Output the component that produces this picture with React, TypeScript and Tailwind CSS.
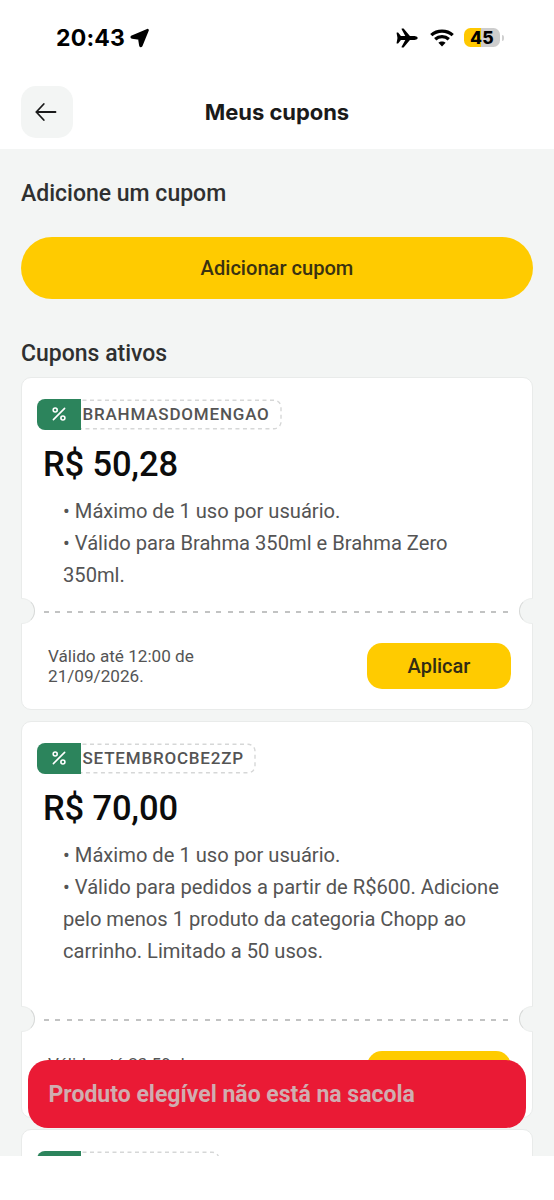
import React from "react";

type Coupon = {
  code: string;
  tagWidth: number;
  value: string;
  lines: string[];
  expiry: string[];
  tall?: boolean;
};

const coupons: Coupon[] = [
  {
    code: "BRAHMASDOMENGAO",
    tagWidth: 245,
    value: "R$ 50,28",
    lines: ["• Máximo de 1 uso por usuário.", "• Válido para Brahma 350ml e Brahma Zero", "350ml."],
    expiry: ["Válido até 12:00 de", "21/09/2026."],
  },
  {
    code: "SETEMBROCBE2ZP",
    tagWidth: 219,
    value: "R$ 70,00",
    lines: [
      "• Máximo de 1 uso por usuário.",
      "• Válido para pedidos a partir de R$600. Adicione",
      "pelo menos 1 produto da categoria Chopp ao",
      "carrinho. Limitado a 50 usos.",
    ],
    expiry: ["Válido até 23:59 de"],
    tall: true,
  },
  { code: "", tagWidth: 183, value: "", lines: [], expiry: [] },
];

function StatusBar() {
  return (
    <div className="flex h-[74px] items-center pl-[56px] pr-[50px] pt-[1px]">
      <span className="font-['Inter',sans-serif] text-[23px] font-bold leading-7 tracking-[0.2px] text-black">20:43</span>
      <svg className="ml-[5px] h-[20px] w-[20px]" viewBox="0 0 20 20">
        <path
          d="M17.6 2.1 2.2 8.7Q1.2 9.3 2.3 9.5L9.3 10.4 10.4 17.4Q10.6 18.6 11.3 17.5Z"
          fill="#000"
          stroke="#000"
          strokeWidth="2.6"
          strokeLinejoin="round"
        />
      </svg>
      <div className="ml-auto flex items-center">
        <svg className="h-[20px] w-[22px]" viewBox="0 0 22 20">
          <path
            d="M.6 4.9Q.5 4.4 1 4.4H2.1L4.9 7.9 9.3 8.1 5.6 1.2Q5.3.5 6 .5H7.6L13.9 8H18.6Q21.8 8.5 21.8 10 21.8 11.5 18.6 12H13.9L7.6 19.5H6Q5.3 19.5 5.6 18.8L9.3 11.9 4.9 12.1 2.1 15.6H1Q.5 15.6.6 15.1L1.4 10.6V9.4Z"
            fill="#000"
          />
        </svg>
        <svg className="ml-[12px] h-[18px] w-[24px]" viewBox="0 0 24 18">
          <path d="M1.3 6.1C7.2.7 16.8.7 22.7 6.1" fill="none" stroke="#000" strokeWidth="3.3" />
          <path d="M5.2 10.2c3.8-3.4 9.8-3.4 13.6 0" fill="none" stroke="#000" strokeWidth="3.3" />
          <path d="M8.4 13.8c2-1.9 5.2-1.9 7.2 0L12 17.4Z" fill="#000" />
        </svg>
        <div className="ml-[10px] flex h-[19px] w-[36px] items-center justify-center rounded-[6.5px] bg-[linear-gradient(90deg,#ffc800_46%,#cdcdcd_46%)]">
          <span className="font-['Inter',sans-serif] text-[17.5px] font-extrabold leading-none tracking-[0.3px] text-black">45</span>
        </div>
        <div className="ml-[2px] h-[6px] w-[2px] rounded-r-full bg-[#cfcfcf]" />
      </div>
    </div>
  );
}

function Tag({ code, width }: { code: string; width: number }) {
  return (
    <div className="relative ml-[16px] flex h-[31px] items-center" style={{ width }}>
      <svg className="absolute inset-0 h-full w-full">
        <rect
          x="1"
          y="1.2"
          width={width - 2}
          height="28.6"
          rx="7"
          fill="none"
          stroke="#d6d7d7"
          strokeWidth="1.4"
          strokeDasharray="4 3.5"
        />
      </svg>
      <div className="relative flex h-[31px] w-[44px] shrink-0 items-center justify-center rounded-l-[8px] bg-[#2c845c]">
        <svg className="h-[14px] w-[14px]" viewBox="0 0 14 14" fill="none" stroke="#fff" strokeWidth="1.6">
          <path d="M12.6 1.4 1.4 12.6" strokeLinecap="round" />
          <circle cx="3.2" cy="3" r="2" />
          <circle cx="10.9" cy="11" r="2" />
        </svg>
      </div>
      <span className="relative ml-[1.5px] whitespace-nowrap text-[17px] font-medium leading-5 tracking-[0.8px] text-[#545454]">
        {code}
      </span>
    </div>
  );
}

function Divider() {
  return (
    <div className="-mx-px flex h-[26px] items-center justify-between overflow-hidden">
      <div className="-ml-[12px] h-[26px] w-[26px] shrink-0 rounded-full border border-y-[#eceeed] border-r-[#d6d8d7] bg-[#f3f5f4]" />
      <div className="ml-[8.5px] mr-[9.5px] mt-[2px] h-[2px] flex-1 bg-[repeating-linear-gradient(90deg,#c2c3c3_0px,#c2c3c3_5px,transparent_5px,transparent_11.47px)]" />
      <div className="-mr-[12px] h-[26px] w-[26px] shrink-0 rounded-full border border-y-[#eceeed] border-l-[#d6d8d7] bg-[#f3f5f4]" />
    </div>
  );
}

function CouponCard({ c }: { c: Coupon }) {
  return (
    <article
      className={`${c.tall ? "h-[397px]" : "h-[333px]"} flex shrink-0 flex-col rounded-[10px] border border-[#e9ebea] bg-white pt-[20.5px]`}
    >
      <div className="-ml-px">
        <Tag code={c.code} width={c.tagWidth} />
      </div>
      {c.code && (
        <>
          <p className="ml-[21px] mt-[14.5px] text-[34.5px] font-medium leading-[40px] tracking-[-0.15px] text-[#0c0c0c]">
            {c.value}
          </p>
          <div
            className={`${c.tall ? "h-[160px]" : "h-[96px]"} ml-[41px] mt-[11px] text-[20.15px] leading-8 text-[#545454]`}
          >
            {c.lines.map((l) => (
              <p key={l} className="whitespace-nowrap">
                {l}
              </p>
            ))}
          </div>
          <div className="mt-[7px]">
            <Divider />
          </div>
          <div className="mt-[19px] flex h-[46px] items-center justify-between pl-[26px] pr-[21px]">
            <div className="h-10 text-[17.15px] leading-5 text-[#545454]">
              {c.expiry.map((l) => (
                <p key={l}>{l}</p>
              ))}
            </div>
            <button className="h-[46px] w-[144px] rounded-[15px] bg-[#ffcb00] text-[20px] font-medium text-[#322c14]">
              Aplicar
            </button>
          </div>
        </>
      )}
    </article>
  );
}

export default function App() {
  return (
    <div className="relative flex h-[1200px] w-[554px] flex-col overflow-hidden bg-white font-['Roboto',sans-serif]">
      <StatusBar />
      <header className="grid h-[75px] grid-cols-[52px_1fr_52px] items-center px-[20.5px]">
        <button
          className="flex h-[52px] w-[52px] items-center justify-center rounded-[15px] bg-[#f3f5f4]"
          aria-label="Voltar"
        >
          <svg
            className="-ml-px h-[20px] w-[22px]"
            viewBox="0 0 22 20"
            fill="none"
            stroke="#1a1a1a"
            strokeWidth="1.8"
            strokeLinecap="round"
            strokeLinejoin="round"
          >
            <path d="M20.5 10H1.3M8.8 2 1.3 10l7.5 8" />
          </svg>
        </button>
        <h1 className="pt-px text-center font-['Inter',sans-serif] text-[22px] font-bold tracking-[-0.05px] text-[#1a1a1a]">
          Meus cupons
        </h1>
      </header>
      <main className="flex h-[1007px] flex-col overflow-hidden bg-[#f3f5f4] px-[21px]">
        <h2 className="mt-[29px] text-[23px] font-medium leading-8 text-[#2f3030]">Adicione um cupom</h2>
        <button className="mt-[27px] h-[62px] shrink-0 rounded-full bg-[#ffcb00] text-[20.1px] font-medium text-[#3a3211]">
          Adicionar cupom
        </button>
        <h2 className="mt-[39px] text-[23px] font-medium leading-8 text-[#2f3030]">Cupons ativos</h2>
        <section className="mt-[7px] flex flex-col gap-[11px]">
          {coupons.map((c, i) => (
            <CouponCard key={i} c={c} />
          ))}
        </section>
      </main>
      <div className="absolute left-[28px] top-[1060px] flex h-[68px] w-[498px] items-center rounded-[20px] bg-[#ea1a35] pl-[20.5px] pt-[2px]">
        <span className="text-[23px] font-bold text-[#d0adb0]">Produto elegível não está na sacola</span>
      </div>
    </div>
  );
}
